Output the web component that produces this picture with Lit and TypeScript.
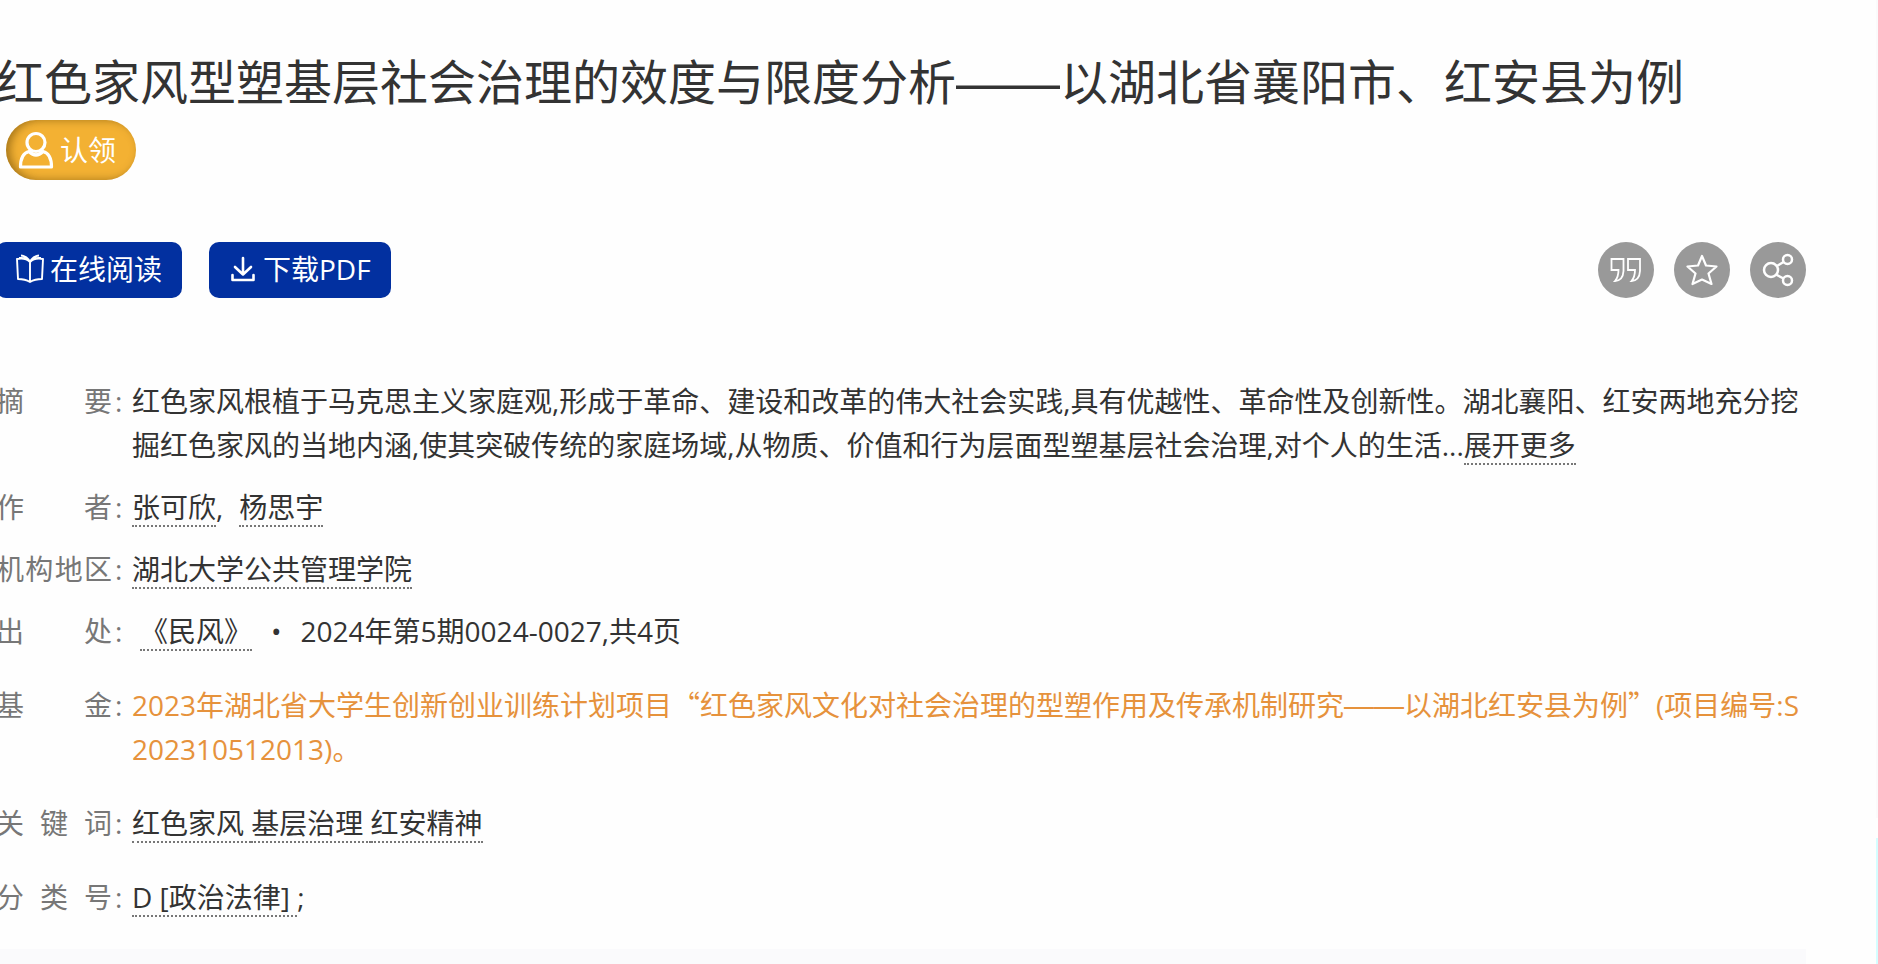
import { LitElement, html, css } from "lit";
import { customElement } from "lit/decorators.js";

@customElement("app-root")
export class AppRoot extends LitElement {
  static styles = css`
    :host {
      display: block;
      overflow: hidden;
      min-height: 100vh;
      background: #fefefe;
      color: #333;
      font: 28px/44px "Open Sans", "Noto Sans CJK SC", sans-serif;
    }
    * { box-sizing: border-box; }
    .page { display: flex; min-height: 100vh; }
    .article {
      flex: 1;
      min-width: 0;
      display: flex;
      flex-direction: column;
      margin: 0 70px 0 -4px;
      padding-top: 47px;
    }
    .rail { display: flex; flex-direction: column; gap: 20px; width: 2px; }
    .rail-top { height: 818px; background: #fafafb; }
    .rail-tool { flex: 1; background: #d5fdff; }
    h1 {
      margin: 0;
      font-size: 48px;
      line-height: 64px;
      font-weight: 400;
      font-family: "Noto Sans CJK SC", sans-serif;
    }
    button { font: inherit; border: 0; cursor: pointer; color: #fff; }
    svg { display: block; fill: none; stroke: currentColor; }
    .claim {
      display: flex;
      align-items: center;
      align-self: flex-start;
      gap: 6px;
      height: 60px;
      margin: 9px 0 0 10px;
      padding: 0 20px 0 12px;
      border-radius: 30px;
      background: #f3b133;
      box-shadow: inset 4px 0 8px rgba(90, 60, 0, 0.5);
    }
    .bar {
      display: flex;
      justify-content: space-between;
      margin-top: 62px;
    }
    .group { display: flex; gap: 27px; }
    .tools { gap: 20px; }
    .primary {
      display: flex;
      align-items: center;
      gap: 6px;
      height: 56px;
      padding: 0 20px 3px;
      border-radius: 10px;
      background: #0230a0;
    }
    .tool {
      display: grid;
      place-items: center;
      width: 56px;
      height: 56px;
      padding: 0;
      border-radius: 50%;
      background: #999;
    }
    dl { margin: 81px 0 0; display: flex; flex-direction: column; gap: 18px; }
    .row { display: flex; }
    .spaced { margin-top: 12px; }
    dt { flex: none; display: flex; width: 136px; color: #777; }
    .label { width: 116px; text-align: justify; text-align-last: justify; }
    .colon { padding-left: 3px; }
    dd { margin: 0; flex: 1; min-width: 0; word-break: break-all; white-space: pre-wrap; }
    a {
      display: inline-block;
      line-height: 36px;
      white-space: pre;
      color: inherit;
      text-decoration: none;
      border-bottom: 2px dotted #777;
    }
    .fund { color: #e6923c; }
    .cjk { font-family: "Noto Sans CJK SC", sans-serif; line-height: 1; }
    .dash { font-family: "Liberation Sans", sans-serif; font-size: 30px; line-height: 1; }
    h1 .dash { font-size: 52px; }
    .journal { margin-left: 8px; }
    .dot { margin: 0 19px; }
    .next { margin-left: 16px; }
    .panel { flex: 1; min-height: 16px; margin-top: 30px; background: #fafafc; }
  `;

  private row(label: string, value: unknown, cls = "") {
    return html`<div class="row ${cls}">
      <dt><span class="label">${label}</span><span class="colon">:</span></dt>
      <dd>${value}</dd>
    </div>`;
  }

  render() {
    return html`<div class="page">
      <main class="article">
        <h1>红色家风型塑基层社会治理的效度与限度分析<span class="dash">——</span>以湖北省襄阳市、红安县为例</h1>
        <button class="claim">
          <svg width="36" height="38" viewBox="0 0 36 38" stroke-width="3.2" stroke-linejoin="round">
            <circle cx="18" cy="11.5" r="9" />
            <path d="M11 20.5C5 22 2.500 28 2.500 36H33.500C33.500 28 31 22 25 20.500Q18 27.500 11 20.500Z" />
          </svg>
          认领
        </button>
        <div class="bar">
          <div class="group">
            <button class="primary">
              <svg width="28" height="30" viewBox="0 0 28 30" stroke-width="1.9" stroke-linejoin="round">
                <path d="M14 8C11 5 6 4 1 5L2 25Q9 25 14 28Q19 25 26 25L27 5C22 4 17 5 14 8ZM14 8V28M3 4Q10 3 14 8Q18 3 25 4M5 1.500Q11 2 14 8Q17 2 23 1.500" />
              </svg>
              在线阅读
            </button>
            <button class="primary">
              <svg width="28" height="26" viewBox="-1 0 28 26" stroke-width="2.6" stroke-linecap="round" stroke-linejoin="round">
                <path d="M13 2V18M5 11L13 18.500L21 11M2.500 19V24H23.500V19" />
              </svg>
              下载PDF
            </button>
          </div>
          <div class="group tools">
            <button class="tool" aria-label="引用">
              <svg width="32" height="26" viewBox="0 0 32 26" stroke-width="1.8">
                <path d="M1.500 2H13.500V14Q13 23.500 5 24Q8.500 20 8.500 13H1.500ZM18 2H30V14Q29.500 23.500 21.500 24Q25 20 25 13H18Z" />
              </svg>
            </button>
            <button class="tool" aria-label="收藏">
              <svg width="32" height="32" viewBox="0 0 32 32" stroke-width="2.2" stroke-linejoin="round">
                <path d="M16 2L20 11.500L30.500 12.500L22.500 19.500L25.500 30L16 25.500L6.500 30L9.500 19.500L1.500 12.500L12 11.500Z" />
              </svg>
            </button>
            <button class="tool" aria-label="分享">
              <svg width="32" height="34" viewBox="0 0 32 34" stroke-width="2.5">
                <circle cx="9" cy="17" r="7" />
                <circle cx="25.500" cy="6.500" r="4.500" />
                <circle cx="25.500" cy="27.500" r="4.500" />
                <path d="M15 13L21.500 9M14 21.500L21.500 25.500" />
              </svg>
            </button>
          </div>
        </div>
        <dl>
          ${this.row("摘要", html`红色家风根植于马克思主义家庭观,形成于革命、建设和改革的伟大社会实践,具有优越性、革命性及创新性。湖北襄阳、红安两地充分挖掘红色家风的当地内涵,使其突破传统的家庭场域,从物质、价值和行为层面型塑基层社会治理,对个人的生活...<a href="#more">展开更多</a>`)}
          ${this.row("作者", html`<a href="#a1">张可欣</a>,<a class="next" href="#a2">杨思宇</a>`)}
          ${this.row("机构地区", html`<a href="#org">湖北大学公共管理学院</a>`)}
          ${this.row("出处", html`<a class="journal" href="#journal">《民风》</a><span class="dot">•</span>2024年第5期0024-0027,共4页`)}
          ${this.row("基金", html`<span class="fund">2023年湖北省大学生创新创业训练计划项目<span class="cjk">“</span>红色家风文化对社会治理的型塑作用及传承机制研究<span class="dash">——</span>以湖北红安县为例<span class="cjk">”</span>(项目编号:S202310512013)。</span>`, "spaced")}
          ${this.row("关键词", html`<a href="#k1">红色家风 </a><a href="#k2">基层治理 </a><a href="#k3">红安精神</a>`, "spaced")}
          ${this.row("分类号", html`<a href="#d">D [政治法律] </a>;`, "spaced")}
        </dl>
        <div class="panel"></div>
      </main>
      <div class="rail"><div class="rail-top"></div><div class="rail-tool"></div></div>
    </div>`;
  }
}
